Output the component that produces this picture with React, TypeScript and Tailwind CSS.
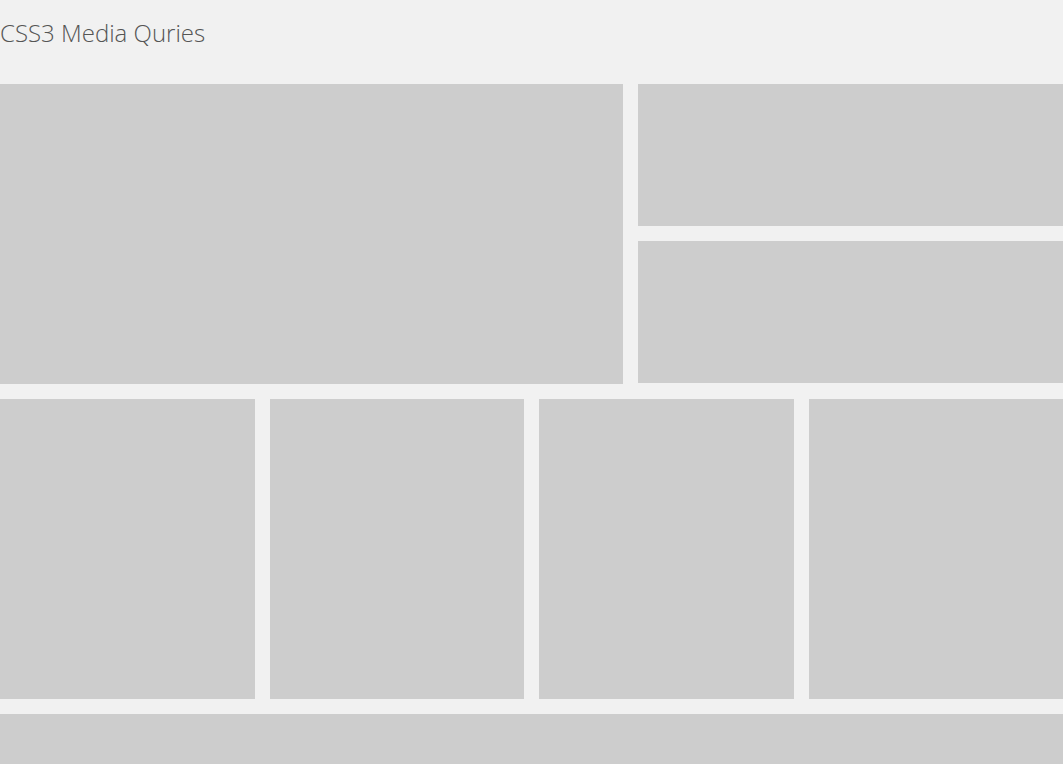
export default function App() {
  return (
    <div className="min-h-screen bg-[#f1f1f1] overflow-hidden" style={{ fontFamily: '"Open Sans", sans-serif' }}>
      <header className="h-[84px] flex items-center pb-[19px]">
        <h1 className="text-[24px] font-light text-[#555]">CSS3 Media Quries</h1>
      </header>
      <div className="grid grid-cols-[623px_1fr] gap-[15px]">
        <div className="h-[300px] bg-[#cdcdcd]" />
        <div className="flex flex-col gap-[15px]">
          <div className="h-[142px] bg-[#cdcdcd]" />
          <div className="h-[142px] bg-[#cdcdcd]" />
        </div>
      </div>
      <div className="grid grid-cols-4 gap-[15px] mt-[15px]">
        <div className="h-[300px] bg-[#cdcdcd]" />
        <div className="h-[300px] bg-[#cdcdcd]" />
        <div className="h-[300px] bg-[#cdcdcd]" />
        <div className="h-[300px] bg-[#cdcdcd]" />
      </div>
      <div className="mt-[15px] h-[300px] bg-[#cdcdcd]" />
    </div>
  );
}
